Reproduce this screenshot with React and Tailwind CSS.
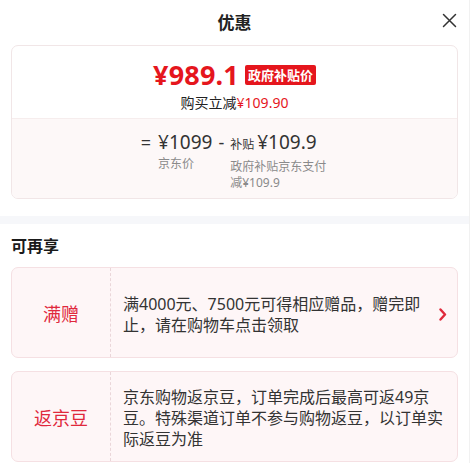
import React from 'react';

const cn = { fontFamily: '"Noto Sans", "Noto Sans CJK SC", sans-serif' };
const num = { fontFamily: '"Noto Sans", "Noto Sans CJK SC", sans-serif' };

function Chevron() {
  return (
    <svg width="8" height="13" viewBox="0 0 8 13" className="shrink-0">
      <polyline points="1.5,1.5 6,6.5 1.5,11.5" fill="none" stroke="#e02a3c" strokeWidth="2.4" strokeLinecap="round" strokeLinejoin="round" />
    </svg>
  );
}

function PerkCard({ label, text, arrow }) {
  return (
    <div className="min-h-[91px] flex rounded-[7px] border border-[#f5e0e3] bg-[#fef6f7]">
      <div className="w-[99px] shrink-0 flex items-center justify-center pt-[4px] text-[18px] text-[#e0283c] border-r border-dashed border-[#ead6d9]">
        {label}
      </div>
      <div className={`flex-1 flex items-center pt-[4px] pl-[12px] ${arrow ? 'pr-[10px]' : 'pr-[12px]'}`}>
        <p className="flex-1 text-[16px] leading-[21px] text-[#333]">{text}</p>
        {arrow && <div className="ml-[6px] flex items-center"><Chevron /></div>}
      </div>
    </div>
  );
}

export default function App() {
  return (
    <div className="w-[475px] h-[463px] bg-white flex overflow-hidden" style={cn}>
      <div className="w-[469px] shrink-0 flex flex-col">
        {/* 标题栏 */}
        <div className="h-[45px] shrink-0 flex items-center justify-center relative">
          <h1 className="text-[17px] font-bold text-[#222]">优惠</h1>
          <svg className="absolute left-[442px] top-[13px]" width="15" height="15" viewBox="0 0 15 15">
            <path d="M1.5 1.5 L13.5 13.5 M13.5 1.5 L1.5 13.5" stroke="#333" strokeWidth="1.5" strokeLinecap="round" />
          </svg>
        </div>

        {/* 价格卡片 */}
        <div className="mx-[11px] rounded-[7px] border border-[#f1e6e7] overflow-hidden">
          <div className="pt-[13px] pb-[5px] flex flex-col items-center">
            <div className="flex items-center h-[32px]">
              <span className="text-[27px] font-bold text-[#e5161d] leading-[32px] tracking-[0.2px]" style={num}>¥989.1</span>
              <span className="ml-[6px] h-[20px] px-[3px] rounded-[2px] bg-[#e5161d] text-white text-[13px] font-bold leading-[20px]">政府补贴价</span>
            </div>
            <div className="mt-[2px] text-[14px] leading-[20px] text-[#222]">
              购买立减<span className="text-[#e5161d]" style={num}>¥109.90</span>
            </div>
          </div>
          <div className="bg-[#fdf8f8] border-t border-[#f6eded] pt-[11px] pb-[7px] flex justify-center">
            <div className="flex items-start text-[#333]">
              <span className="text-[18px] leading-[24px] mr-[7px]">=</span>
              <div className="flex flex-col">
                <span className="text-[19px] leading-[24px]" style={num}>¥1099</span>
                <span className="mt-[2px] text-[12px] leading-[16px] text-[#8a8a8a]">京东价</span>
              </div>
              <span className="text-[18px] leading-[24px] mx-[6px]">-</span>
              <div className="flex flex-col w-[98px]">
                <span className="leading-[24px] whitespace-nowrap">
                  <span className="text-[12px] mr-[3px]">补贴</span>
                  <span className="text-[19px]" style={num}>¥109.9</span>
                </span>
                <span className="mt-[2px] text-[12px] leading-[16px] text-[#8a8a8a]">政府补贴京东支付减¥109.9</span>
              </div>
            </div>
          </div>
        </div>

        <div className="h-[8px] mt-[17px] shrink-0 bg-[#f6f7fa]" />

        {/* 可再享 */}
        <div className="px-[11px] pt-[11px]">
          <h2 className="text-[16px] leading-[22px] font-bold text-[#1a1a1a] mb-[10px]">可再享</h2>
          <div className="flex flex-col gap-[13px]">
            <PerkCard label="满赠" text="满4000元、7500元可得相应赠品，赠完即止，请在购物车点击领取" arrow />
            <PerkCard label="返京豆" text="京东购物返京豆，订单完成后最高可返49京豆。特殊渠道订单不参与购物返豆，以订单实际返豆为准" />
          </div>
        </div>
      </div>
      <div className="flex-1 border-l border-[#f1f1f1]" />
    </div>
  );
}
